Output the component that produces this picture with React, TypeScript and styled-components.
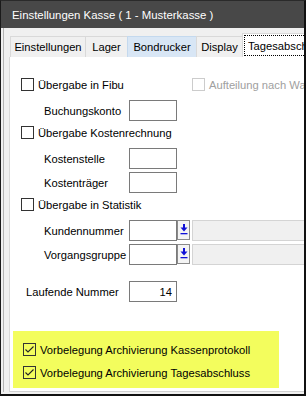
import React from "react";
import styled, { createGlobalStyle } from "styled-components";

const Global = createGlobalStyle`
  html, body { margin: 0; padding: 0; background: #ffffff; }
  * { box-sizing: border-box; }
`;

const FONT = `"Segoe UI", "Liberation Sans", Arial, sans-serif`;

const Window = styled.div`
  width: 306px;
  height: 396px;
  display: flex;
  flex-direction: column;
  background: #f0f0f0;
  border-left: 1px solid #1a1a1a;
  border-top: 1px solid #2a2a2a;
  border-right: 2px solid #111;
  border-bottom: 2px solid #111;
  font-family: ${FONT};
  font-size: 11.2px;
  color: #000;
  overflow: hidden;
  position: relative;
`;

const TitleBar = styled.div`
  height: 27px;
  flex: none;
  background: #484848;
  color: #ffffff;
  font-size: 11.4px;
  display: flex;
  align-items: center;
  padding-left: 11px;
  white-space: nowrap;
`;

const Body = styled.div`
  flex: 1;
  display: flex;
  padding: 0 0 2px 2px;
  min-height: 0;
`;

const Inner = styled.div`
  flex: 1;
  display: flex;
  flex-direction: column;
  border-left: 1px solid #b4b4b4;
  padding: 5px 0 0 5px;
  min-width: 0;
`;

const TabStrip = styled.div`
  height: 24px;
  flex: none;
  display: flex;
  align-items: flex-end;
  padding-left: 1px;
  white-space: nowrap;
`;

const Tab = styled.div<{ $w: number; $hover?: boolean }>`
  width: ${(p) => p.$w}px;
  height: 21px;
  flex: none;
  display: flex;
  align-items: center;
  justify-content: center;
  background: ${(p) => (p.$hover ? "#d8e6f5" : "#f0f0f0")};
  border: 1px solid ${(p) => (p.$hover ? "#c4d9ee" : "#d9d9d9")};
  border-bottom: none;
  margin-right: -1px;
`;

const ActiveTab = styled.div`
  flex: 1;
  height: 24px;
  background: #ffffff;
  border: 1px solid #d9d9d9;
  border-bottom: none;
  border-right: none;
  padding: 1px 0 1px 1px;
  position: relative;
  z-index: 1;
`;

const FocusRect = styled.div`
  height: 100%;
  border: 1px dotted #000;
  border-right: none;
  display: flex;
  align-items: center;
  padding-left: 3px;
  overflow: hidden;
`;

const Panel = styled.div`
  flex: 1;
  background: #ffffff;
  border-left: 1px solid #d9d9d9;
  border-bottom: 1px solid #d0d0d0;
  display: flex;
  flex-direction: column;
  padding: 21px 0 0 11px;
  overflow: hidden;
  white-space: nowrap;
  margin-bottom: 0;
`;

const Row = styled.div<{ $mt: number; $h: number; $indent?: number }>`
  margin-top: ${(p) => p.$mt}px;
  height: ${(p) => p.$h}px;
  padding-left: ${(p) => p.$indent ?? 0}px;
  display: flex;
  align-items: center;
  flex: none;
`;

const CheckGroup = styled.label<{ $w?: number; $disabled?: boolean }>`
  display: flex;
  align-items: center;
  gap: 4px;
  width: ${(p) => (p.$w ? `${p.$w}px` : "auto")};
  flex: none;
  color: ${(p) => (p.$disabled ? "#a0a0a0" : "#000")};
`;

const Box = styled.span<{ $disabled?: boolean; $transparent?: boolean }>`
  width: 13px;
  height: 13px;
  flex: none;
  border: 1px solid ${(p) => (p.$disabled ? "#cccccc" : "#333333")};
  background: ${(p) => (p.$transparent ? "transparent" : "#ffffff")};
  display: flex;
  align-items: center;
  justify-content: center;
`;

const Label = styled.span<{ $w: number }>`
  width: ${(p) => p.$w}px;
  flex: none;
  overflow: visible;
`;

const Input = styled.div<{ $right?: boolean }>`
  width: 48px;
  height: 21px;
  flex: none;
  border: 1px solid #7a7a7a;
  background: #fff;
  display: flex;
  align-items: center;
  justify-content: ${(p) => (p.$right ? "flex-end" : "flex-start")};
  padding: 0 4px;
`;

const DropButton = styled.div`
  width: 13px;
  height: 20px;
  flex: none;
  margin-left: 0;
  align-self: flex-start;
  border: 1px solid #8a8a8a;
  background: #f4f4f4;
  display: flex;
  justify-content: center;
  padding-top: 3px;
`;

const DisabledField = styled.div`
  flex: none;
  width: 140px;
  height: 21px;
  margin-left: 2px;
  background: #f0f0f0;
  border: 1px solid #d4d4d4;
`;

const Highlight = styled.div`
  margin-top: 29px;
  margin-left: -8px;
  width: 266px;
  height: 57px;
  flex: none;
  background: #f3fd5d;
  padding: 12px 10px 0 10px;
  display: flex;
  flex-direction: column;
  gap: 10px;
`;

const Check = () => (
  <svg width="11" height="11" viewBox="0 0 11 11">
    <polyline points="1.5,5.5 4,8 9.5,2.5" fill="none" stroke="#222" strokeWidth="1.1" />
  </svg>
);

const DownArrow = () => (
  <svg width="8" height="11" viewBox="0 0 8 11">
    <path d="M3 0h2v3.5h2.5L4 7.5 0.5 3.5H3z" fill="#1010d8" />
    <rect x="0.5" y="9" width="7" height="1.3" fill="#1010d8" />
  </svg>
);

type CBProps = { text: string; checked?: boolean; disabled?: boolean; w?: number; transparent?: boolean };
const CheckBox = ({ text, checked, disabled, w, transparent }: CBProps) => (
  <CheckGroup $w={w} $disabled={disabled}>
    <Box $disabled={disabled} $transparent={transparent}>{checked && <Check />}</Box>
    <span>{text}</span>
  </CheckGroup>
);

export default function App() {
  return (
    <>
      <Global />
      <Window>
        <TitleBar>Einstellungen Kasse ( 1 - Musterkasse )</TitleBar>
        <Body>
          <Inner>
            <TabStrip>
              <Tab $w={76}>Einstellungen</Tab>
              <Tab $w={43}>Lager</Tab>
              <Tab $w={70} $hover>Bondrucker</Tab>
              <Tab $w={47}>Display</Tab>
              <ActiveTab>
                <FocusRect>Tagesabschluss</FocusRect>
              </ActiveTab>
            </TabStrip>
            <Panel>
              <Row $mt={0} $h={13}>
                <CheckBox text="Übergabe in Fibu" w={171} />
                <CheckBox text="Aufteilung nach Warengruppen" disabled />
              </Row>
              <Row $mt={9} $h={21} $indent={23}>
                <Label $w={85}>Buchungskonto</Label>
                <Input />
              </Row>
              <Row $mt={5} $h={13}>
                <CheckBox text="Übergabe Kostenrechnung" />
              </Row>
              <Row $mt={9} $h={21} $indent={23}>
                <Label $w={85}>Kostenstelle</Label>
                <Input />
              </Row>
              <Row $mt={3} $h={21} $indent={23}>
                <Label $w={85}>Kostenträger</Label>
                <Input />
              </Row>
              <Row $mt={5} $h={13}>
                <CheckBox text="Übergabe in Statistik" />
              </Row>
              <Row $mt={9} $h={21} $indent={23}>
                <Label $w={85}>Kundennummer</Label>
                <Input />
                <DropButton>
                  <DownArrow />
                </DropButton>
                <DisabledField />
              </Row>
              <Row $mt={3} $h={21} $indent={23}>
                <Label $w={85}>Vorgangsgruppe</Label>
                <Input />
                <DropButton>
                  <DownArrow />
                </DropButton>
                <DisabledField />
              </Row>
              <Row $mt={16} $h={21} $indent={5}>
                <Label $w={103}>Laufende Nummer</Label>
                <Input $right>14</Input>
              </Row>
              <Highlight>
                <Row $mt={0} $h={13}>
                  <CheckBox text="Vorbelegung Archivierung Kassenprotokoll" checked transparent />
                </Row>
                <Row $mt={0} $h={13}>
                  <CheckBox text="Vorbelegung Archivierung Tagesabschluss" checked transparent />
                </Row>
              </Highlight>
            </Panel>
          </Inner>
        </Body>
      </Window>
    </>
  );
}
